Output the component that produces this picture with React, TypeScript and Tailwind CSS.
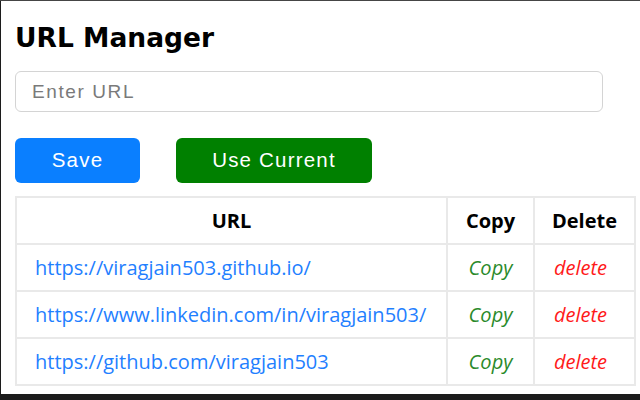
import { useState } from "react";

const initialUrls = [
  "https://viragjain503.github.io/",
  "https://www.linkedin.com/in/viragjain503/",
  "https://github.com/viragjain503",
];

export default function App() {
  const [urls, setUrls] = useState<string[]>(initialUrls);
  const [value, setValue] = useState<string>("");

  const save = () => {
    if (!value.trim()) return;
    setUrls([...urls, value.trim()]);
    setValue("");
  };

  return (
    <div className="w-[640px] h-[400px] overflow-hidden bg-[#1c1c1c] border-t border-t-[#454545] pl-px">
      <div className="h-[393px] bg-white pl-[14px] pr-[6px] pt-[22px]">
        <h1 className="font-['DejaVu_Sans',sans-serif] font-bold text-[26.5px] leading-[30px] text-black">
          URL Manager
        </h1>

        {/* Input */}
        <input
          value={value}
          onChange={(e) => setValue(e.target.value)}
          placeholder="Enter URL"
          className="mt-[18px] block w-[588px] h-[41px] rounded-[6px] border border-[#d4d4d4] pl-[16px] font-['Liberation_Sans',Arial,sans-serif] text-[19px] tracking-[1.6px] text-black placeholder:text-[#7a7a7a] outline-none"
        />

        {/* Buttons */}
        <div className="mt-[26px] flex gap-[36px]">
          <button
            onClick={save}
            className="w-[125px] h-[45px] rounded-[6px] bg-[#0a7fff] text-white font-['Liberation_Sans',Arial,sans-serif] text-[20.5px] tracking-[1.2px]"
          >
            Save
          </button>
          <button
            onClick={() => setValue(window.location.href)}
            className="w-[196px] h-[45px] rounded-[6px] bg-[#008000] text-white font-['Liberation_Sans',Arial,sans-serif] text-[20.5px] tracking-[1.2px]"
          >
            Use Current
          </button>
        </div>

        {/* Table */}
        <table className="mt-[13px] w-[619px] table-fixed border-collapse font-['Open_Sans',sans-serif] text-[20px]">
          <colgroup>
            <col className="w-[431px]" />
            <col className="w-[87px]" />
            <col className="w-[101px]" />
          </colgroup>
          <thead>
            <tr className="h-[47px]">
              <th className="border-2 border-[#e9e9e9] font-bold text-black text-center">URL</th>
              <th className="border-2 border-[#e9e9e9] font-bold text-black text-center">Copy</th>
              <th className="border-2 border-[#e9e9e9] font-bold text-black text-center">Delete</th>
            </tr>
          </thead>
          <tbody>
            {urls.map((url, i) => (
              <tr key={i} className="h-[47px]">
                <td className="border-2 border-[#e9e9e9] pl-[18px] whitespace-nowrap overflow-hidden">
                  <a href={url} className="text-[#1f80ff]">
                    {url}
                  </a>
                </td>
                <td className="border-2 border-[#e9e9e9] text-center">
                  <button
                    onClick={() => navigator.clipboard?.writeText(url)}
                    className="italic text-[#2a8a2a]"
                  >
                    Copy
                  </button>
                </td>
                <td className="border-2 border-[#e9e9e9] text-center pr-[8px]">
                  <button
                    onClick={() => setUrls(urls.filter((_, j) => j !== i))}
                    className="italic text-[#ff1a1a]"
                  >
                    delete
                  </button>
                </td>
              </tr>
            ))}
          </tbody>
        </table>
      </div>
    </div>
  );
}
